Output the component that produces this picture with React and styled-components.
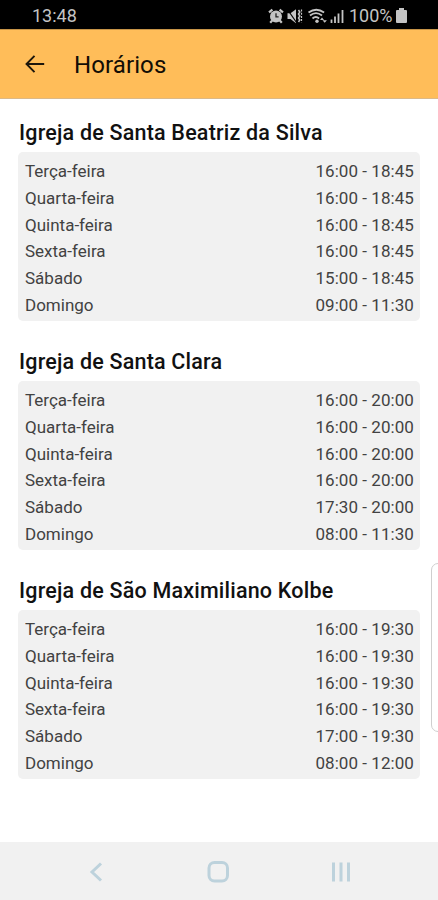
import React from "react";
import styled, { createGlobalStyle } from "styled-components";

const churches = [
  {
    name: "Igreja de Santa Beatriz da Silva",
    hours: [
      ["Terça-feira", "16:00 - 18:45"],
      ["Quarta-feira", "16:00 - 18:45"],
      ["Quinta-feira", "16:00 - 18:45"],
      ["Sexta-feira", "16:00 - 18:45"],
      ["Sábado", "15:00 - 18:45"],
      ["Domingo", "09:00 - 11:30"],
    ],
  },
  {
    name: "Igreja de Santa Clara",
    hours: [
      ["Terça-feira", "16:00 - 20:00"],
      ["Quarta-feira", "16:00 - 20:00"],
      ["Quinta-feira", "16:00 - 20:00"],
      ["Sexta-feira", "16:00 - 20:00"],
      ["Sábado", "17:30 - 20:00"],
      ["Domingo", "08:00 - 11:30"],
    ],
  },
  {
    name: "Igreja de São Maximiliano Kolbe",
    hours: [
      ["Terça-feira", "16:00 - 19:30"],
      ["Quarta-feira", "16:00 - 19:30"],
      ["Quinta-feira", "16:00 - 19:30"],
      ["Sexta-feira", "16:00 - 19:30"],
      ["Sábado", "17:00 - 19:30"],
      ["Domingo", "08:00 - 12:00"],
    ],
  },
];

const StatusIcons = () => (
  <svg width="78" height="18" viewBox="0 0 78 18" fill="none" stroke="#c4c4c4">
    {/* alarm */}
    <circle cx="9" cy="9.5" r="6" fill="#c4c4c4" stroke="none" />
    <path d="M9 6.300v3.600h2.600" stroke="#222" strokeWidth="1.300" />
    <path d="M2 5.400l3.400-2.800M16 5.400l-3.400-2.800M5.200 13.600l-2 2.200M12.800 13.600l2 2.200" strokeWidth="2.200" />
    {/* muted, vibrating */}
    <path d="M20.500 6.300h3l5.500-4v14l-5.500-4.300h-3z" fill="#c4c4c4" stroke="none" />
    <path d="M20.500 2.500l9 13" stroke="#000" strokeWidth="1.200" />
    <path d="M31.500 3l1.300 2-1.300 2 1.300 2-1.300 2 1.300 2-1.300 2" strokeWidth="1.500" />
    <path d="M34.500 2.500v13" strokeWidth="1.200" strokeDasharray="2 1.200" />
    {/* wifi */}
    <path d="M41.500 5.500q7.800-5.500 15.600 0M43 8.500q6-4.800 12 0M45.500 11.500q3.300-2.900 6.600 0" strokeWidth="1.800" />
    <circle cx="50" cy="14.200" r="1.700" fill="#c4c4c4" stroke="none" />
    <path d="M53 13l2-2.600 2 2.600zM55.500 13.200l2.200 2.600 2.200-2.600z" fill="#c4c4c4" stroke="none" />
    {/* signal */}
    <path d="M64.500 12.500v3.500M68 9.500v6.500M71.500 6.500v9.500M75.500 3v13" strokeWidth="1.800" />
  </svg>
);

const App = () => (
  <>
    <GlobalStyle />
    <Screen>
      <StatusBar>
        <Clock>13:48</Clock>
        <StatusIcons />
        <Percent>100%</Percent>
        <svg width="11" height="15" viewBox="0 0 11 15" fill="#c4c4c4">
          <path d="M3 0h5v2h2q1 0 1 1v11q0 1-1 1H1q-1 0-1-1V3q0-1 1-1h2z" />
        </svg>
      </StatusBar>
      <Header>
        <BackButton aria-label="Voltar">
          <svg width="20" height="18" viewBox="0 0 20 18" fill="none" stroke="#1d160b" strokeWidth="1.900">
            <path d="M9.500 .8L1.500 9l8 8.200M1.800 9h17.400" />
          </svg>
        </BackButton>
        <Title>Horários</Title>
      </Header>
      <Content>
        {churches.map((church) => (
          <section key={church.name}>
            <ChurchName>{church.name}</ChurchName>
            <Card>
              {church.hours.map(([day, time]) => (
                <Row key={day}>
                  <span>{day}</span>
                  <Time>{time}</Time>
                </Row>
              ))}
            </Card>
          </section>
        ))}
        <EdgePanel />
      </Content>
      <NavBar>
        <svg width="14" height="20" viewBox="0 0 14 20">
          <path d="M12 1.500L3 10l9 8.500" />
        </svg>
        <svg width="22" height="22" viewBox="0 0 22 22">
          <rect x="2" y="1.500" width="18.500" height="18.500" rx="5.500" />
        </svg>
        <svg width="20" height="20" viewBox="0 0 20 20">
          <path d="M2.500 .5v19M10 .5v19M17.500 .5v19" />
        </svg>
      </NavBar>
    </Screen>
  </>
);

const GlobalStyle = createGlobalStyle`
  * {
    box-sizing: border-box;
  }

  body {
    margin: 0;
    background: #fff;
    font-family: Roboto, sans-serif;
  }
`;

const Screen = styled.div`
  display: flex;
  flex-direction: column;
  width: 438px;
  height: 900px;
  overflow: hidden;
`;

const StatusBar = styled.div`
  display: flex;
  align-items: center;
  height: 29px;
  padding: 2px 31px 0 32px;
  background: #000;
  color: #c4c4c4;
`;

const Clock = styled.span`
  flex: 1;
  font-size: 18px;
`;

const Percent = styled.span`
  width: 46px;
  margin: 0 1px 0 4px;
  font-size: 18px;
  white-space: nowrap;
`;

const Header = styled.header`
  display: flex;
  align-items: center;
  height: 70px;
  padding: 0 25px;
  background: #ffbd59;
  border-top: 1px solid #c79447;
  border-bottom: 1px solid #dcb987;
`;

const BackButton = styled.button`
  display: flex;
  margin-right: 29px;
  padding: 0;
  border: 0;
  background: none;
`;

const Title = styled.h1`
  margin: 2px 0 0;
  color: #120d05;
  font-size: 24px;
  font-weight: 450;
  letter-spacing: 0.1px;
`;

const Content = styled.main`
  position: relative;
  display: flex;
  flex: 1;
  flex-direction: column;
  gap: 28px;
  padding: 21px 18px 0;
`;

const ChurchName = styled.h2`
  margin: 0 0 6px 1px;
  color: #111;
  font-size: 21.5px;
  font-weight: 500;
  line-height: 26px;
  letter-spacing: 0.2px;
`;

const Card = styled.div`
  height: 169px;
  padding: 6px 6px 0 7px;
  background: #f1f1f1;
  border-radius: 5px;
`;

const Row = styled.div`
  display: flex;
  justify-content: space-between;
  height: 26.8px;
  color: #424242;
  font-size: 17px;
  line-height: 26.6px;
`;

const Time = styled.span`
  letter-spacing: 0.06px;
`;

/* Edge panel handle, partly off the right side of the screen */
const EdgePanel = styled.div`
  position: absolute;
  top: 464px;
  right: -8px;
  width: 15px;
  height: 169px;
  background: #fff;
  border: 1px solid #cfcfcf;
  border-radius: 7px;
`;

const NavBar = styled.nav`
  display: flex;
  align-items: center;
  justify-content: space-between;
  height: 58px;
  padding: 1px 87px 0 89px;
  background: #f1f1f1;

  svg {
    fill: none;
    stroke: #bdd2dc;
    stroke-width: 3;
  }

  svg:nth-child(2) {
    margin-left: 2px;
  }
`;

export default App;
